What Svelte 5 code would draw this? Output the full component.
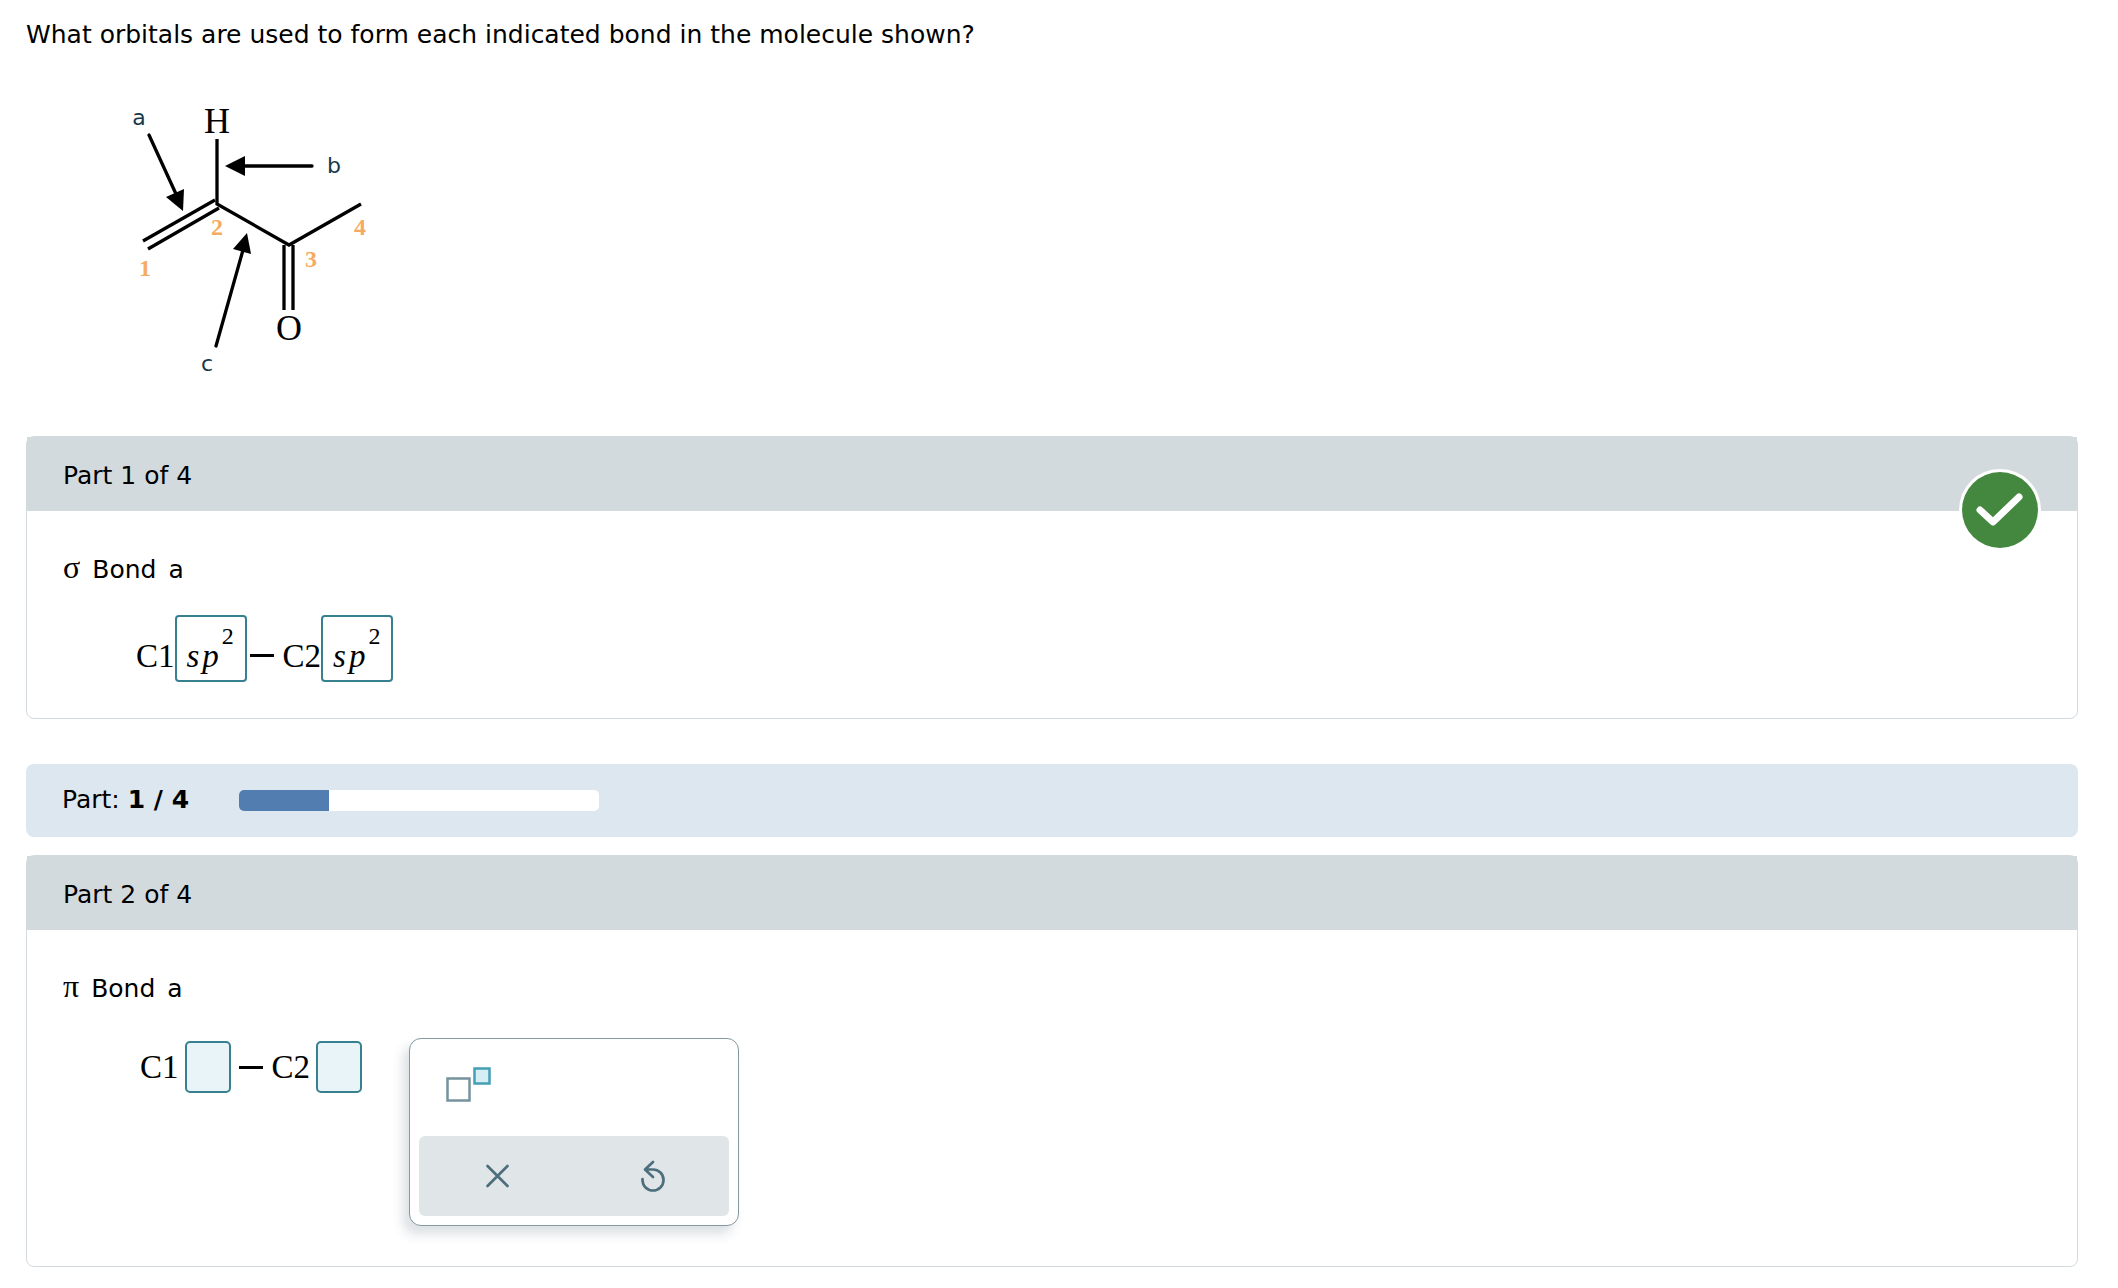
<script>
  const totalParts = 4;
  let completedParts = $state(1);
  let firstOrbital = $state("");
  let secondOrbital = $state("");

  const progress = $derived((completedParts / totalParts) * 100);

  function clearAnswers() {
    firstOrbital = "";
    secondOrbital = "";
  }
</script>

{#snippet orbital()}
  <span class="answer"><i>s</i><i>p</i><sup>2</sup></span>
{/snippet}

<main class="question">
  <p class="prompt">What orbitals are used to form each indicated bond in the molecule shown?</p>

  <svg class="molecule" viewBox="26 84 360 300" role="img" aria-label="Molecule with bonds a, b and c">
    <g class="bonds">
      <path d="M217 139V204L289 245L361 204" />
      <path d="M143 241L215 200" />
      <path d="M148 249L219 208" />
      <path d="M284 245V310M293 245V310" />
    </g>
    <g class="arrows">
      <path d="M149 135L176 194" />
      <path d="M312 166H243" />
      <path d="M216 346L243 250" />
    </g>
    <path d="M183 211L166 197L184 189Z" />
    <path d="M225 166L245 156V176Z" />
    <path d="M247 233L233 249L251 254Z" />
    <g class="atoms">
      <text x="217" y="133">H</text>
      <text x="289" y="340">O</text>
    </g>
    <g class="numbers">
      <text x="145" y="276">1</text>
      <text x="217" y="235">2</text>
      <text x="311" y="267">3</text>
      <text x="360" y="235">4</text>
    </g>
    <g class="letters">
      <text x="139" y="125">a</text>
      <text x="334" y="173">b</text>
      <text x="207" y="371">c</text>
    </g>
  </svg>

  <section class="part">
    <h2 class="part-header">Part 1 of 4</h2>
    <svg class="correct" viewBox="0 0 82 82" role="img" aria-label="Correct">
      <circle cx="41" cy="41" r="41" fill="#fff" />
      <circle cx="41" cy="41" r="38" fill="#44873f" />
      <path d="M21 41L34 53L60 28" />
    </svg>
    <div class="part-body">
      <p class="bond"><span class="greek">σ</span> <span>Bond</span> <span>a</span></p>
      <div class="equation solved">
        <span>C1</span>
        {@render orbital()}
        <span class="dash"></span>
        <span>C2</span>
        {@render orbital()}
      </div>
    </div>
  </section>

  <div class="status">
    <span>Part: <b>{completedParts} / {totalParts}</b></span>
    <div
      class="track"
      role="progressbar"
      aria-label="Parts completed"
      aria-valuenow={completedParts}
      aria-valuemin="0"
      aria-valuemax={totalParts}
    >
      <div class="fill" style="width: {progress}%"></div>
    </div>
  </div>

  <section class="part">
    <h2 class="part-header">Part 2 of 4</h2>
    <div class="part-body">
      <p class="bond"><span class="greek">π</span> <span>Bond</span> <span>a</span></p>
      <div class="work">
        <div class="equation">
          <label for="orbital-1">C1</label>
          <input id="orbital-1" type="text" bind:value={firstOrbital} />
          <span class="dash"></span>
          <label for="orbital-2">C2</label>
          <input id="orbital-2" type="text" bind:value={secondOrbital} />
        </div>
        <div class="palette">
          <button class="tool" aria-label="Superscript">
            <svg width="46" height="36" viewBox="0 0 46 36">
              <rect x="1.5" y="11.5" width="22" height="22" fill="#fff" stroke="#76939d" stroke-width="2.5" />
              <rect x="28.5" y="1.5" width="15" height="15" fill="#d4eef3" stroke="#449eb6" stroke-width="2.5" />
            </svg>
          </button>
          <div class="actions">
            <button aria-label="Clear" onclick={clearAnswers}>
              <svg width="32" height="32" viewBox="0 0 32 32">
                <path d="M6.5 6L26.5 26M26.5 6L6.5 26" />
              </svg>
            </button>
            <button aria-label="Reset" onclick={clearAnswers}>
              <svg width="32" height="32" viewBox="0 0 32 32">
                <path d="M17 2L9 9.500L17 17M9 9.500H17A10.500 10.500 0 1 1 6.500 20V19" />
              </svg>
            </button>
          </div>
        </div>
      </div>
    </div>
  </section>
</main>

<style>
  :global(body) {
    margin: 0;
    background: #fff;
  }

  .question {
    padding: 17px 40px 20px 26px;
    color: #000;
    font-family: Verdana, "DejaVu Sans", sans-serif;
    font-size: 25px;
    line-height: 36px;
  }

  .prompt {
    margin: 0 0 31px;
  }

  .molecule {
    display: block;
    width: 360px;
    height: 300px;
    margin-bottom: 52px;
  }

  .bonds path,
  .arrows path {
    fill: none;
    stroke: #000;
    stroke-width: 3.3;
  }

  .arrows path {
    stroke-linecap: round;
  }

  .molecule text {
    text-anchor: middle;
  }

  .atoms {
    font: 36px "Liberation Serif", serif;
  }

  .numbers {
    font: bold 24px "Liberation Serif", serif;
    fill: #f5ab62;
  }

  .letters {
    font-size: 22px;
    fill: #17394a;
  }

  .part {
    position: relative;
    border: 1px solid #d3dadd;
    border-radius: 8px;
  }

  .part-header {
    margin: 0;
    padding: 21px 36px 17px;
    background: #d3dadd;
    font-size: inherit;
    font-weight: normal;
  }

  .correct {
    position: absolute;
    top: 32px;
    right: 36px;
    width: 82px;
    height: 82px;
  }

  .correct path {
    fill: none;
    stroke: #fff;
    stroke-width: 7;
    stroke-linecap: round;
    stroke-linejoin: round;
  }

  .part-body {
    padding: 41px 36px 36px;
  }

  .bond {
    display: flex;
    align-items: baseline;
    gap: 12px;
    margin: 0 0 27px;
  }

  .greek {
    font-family: "Liberation Serif", serif;
    font-size: 32px;
    line-height: 24px;
  }

  .equation {
    display: flex;
    align-items: center;
    padding: 3px 0 0 77px;
    font-family: "Liberation Serif", serif;
    font-size: 33px;
    line-height: 40px;
  }

  .equation.solved {
    align-items: baseline;
    padding: 0 0 0 73px;
  }

  .answer {
    display: flex;
    align-items: baseline;
    gap: 3px;
    box-sizing: border-box;
    width: 72px;
    height: 67px;
    padding: 19px 0 0 10px;
    border: 2px solid #37808f;
    border-radius: 4px;
  }

  .answer sup {
    align-self: flex-start;
    margin-top: -12px;
    font-size: 24px;
    line-height: 24px;
  }

  .dash {
    width: 24px;
    height: 3px;
    margin: 0 9px 0 8px;
    background: #000;
  }

  .solved .dash {
    align-self: center;
    margin: 13px 9px 0 3px;
  }

  .equation input {
    box-sizing: border-box;
    width: 46px;
    height: 52px;
    margin-left: 6px;
    padding: 4px;
    border: 2px solid #37808f;
    border-radius: 5px;
    background: #e9f4f9;
    font: inherit;
    text-align: center;
  }

  .work {
    display: flex;
    align-items: flex-start;
    gap: 47px;
    padding: 4px 0;
  }

  .palette {
    box-sizing: border-box;
    width: 330px;
    padding: 9px;
    border: 1px solid #8499a1;
    border-radius: 12px;
    background: #fff;
    box-shadow: -6px 8px 12px rgba(30, 65, 80, 0.16);
  }

  .palette button {
    padding: 0;
    border: none;
    background: none;
    cursor: pointer;
  }

  .palette svg {
    display: block;
  }

  .palette .tool {
    margin: 19px 27px 33px;
  }

  .tool,
  .actions {
    display: flex;
  }

  .actions {
    height: 80px;
    border-radius: 6px;
    background: #e0e5e7;
  }

  .actions button {
    display: flex;
    flex: 1;
    align-items: center;
    justify-content: center;
  }

  .actions path {
    fill: none;
    stroke: #4d6f7d;
    stroke-width: 2.7;
    stroke-linecap: round;
    stroke-linejoin: round;
  }

  .status {
    display: flex;
    align-items: center;
    gap: 50px;
    margin: 45px 0 18px;
    padding: 18px 36px 19px;
    border-radius: 8px;
    background: #dde7f0;
  }

  .track {
    width: 360px;
    height: 21px;
    overflow: hidden;
    border-radius: 5px;
    background: #fff;
  }

  .fill {
    height: 100%;
    background: #527db1;
  }
</style>
